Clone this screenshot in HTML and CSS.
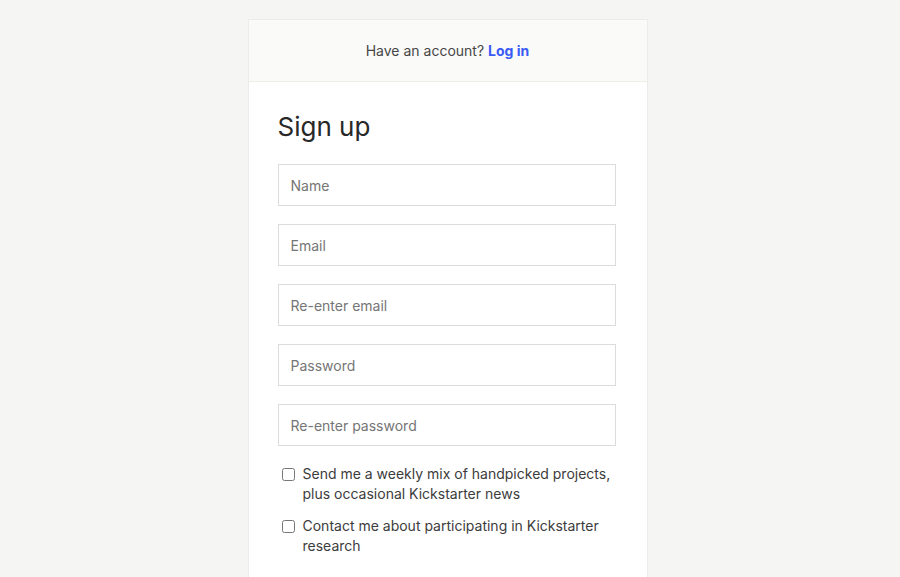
FILE: index.html
```html
<!DOCTYPE html>
<html lang="en">
<head>
  <meta charset="UTF-8" />
  <title>Sign up</title>
  <link rel="stylesheet" href="styles.css">
</head>
<body>
  <div class="card">
    <div class="card-head">
      Have an account? <a href="#" class="login-link">Log in</a>
    </div>
    <form class="card-body">
      <h1>Sign up</h1>
      <input type="text" placeholder="Name" />
      <input type="email" placeholder="Email" />
      <input type="email" placeholder="Re-enter email" />
      <input type="password" placeholder="Password" />
      <input type="password" placeholder="Re-enter password" />

      <label class="check">
        <input type="checkbox" />
        <span>Send me a weekly mix of handpicked projects, plus occasional Kickstarter news</span>
      </label>
      <label class="check">
        <input type="checkbox" />
        <span>Contact me about participating in Kickstarter research</span>
      </label>
    </form>
  </div>
</body>
</html>
```

FILE: styles.css
```css
body {
  margin: 0;
  padding: 19px 5px 0 0;
  background-color: #f5f5f3;
  font-family: Inter, "Noto Sans", sans-serif;
  color: #282828;
}
.card {
  width: 398px;
  margin: 0 auto;
  background: #ffffff;
  border: 1px solid #ecece9;
  border-bottom: none;
  min-height: 600px;
}
.card-head {
  height: 61px;
  display: flex;
  align-items: center;
  justify-content: center;
  gap: 4px;
  background: #fafaf8;
  border-bottom: 1px solid #ecece9;
  font-size: 14px;
  color: #464646;
}
.login-link {
  color: #3b5bf6;
  font-weight: bold;
  text-decoration: none;
}
.card-body {
  padding: 28px 31px 0 29px;
  display: flex;
  flex-direction: column;
  gap: 18px;
}
h1 {
  margin: 0 0 2px 0;
  font-size: 26px;
  font-weight: 400;
  line-height: 34px;
  color: #282828;
}
.card-body input[type="text"],
.card-body input[type="email"],
.card-body input[type="password"] {
  box-sizing: border-box;
  width: 100%;
  height: 42px;
  padding: 0 12px;
  border: 1px solid #dcdcdc;
  border-radius: 0;
  font-family: inherit;
  font-size: 14px;
  color: #282828;
  outline: none;
}
.card-body input::placeholder {
  color: #757575;
}
.check {
  display: flex;
  align-items: flex-start;
  gap: 8px;
  padding-left: 4px;
  font-size: 14px;
  line-height: 20px;
  color: #3c3c3c;
}
.check + .check {
  margin-top: -6px;
}
.check input {
  margin: 4px 0 0 0;
  width: 13px;
  height: 13px;
  flex: none;
}
```
